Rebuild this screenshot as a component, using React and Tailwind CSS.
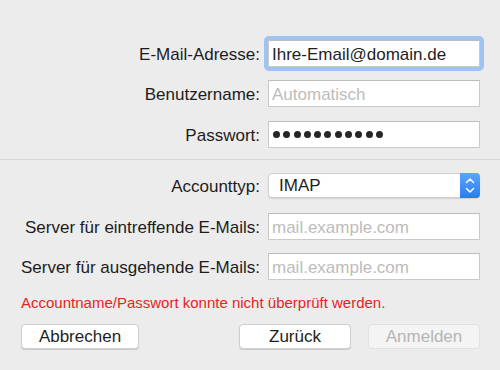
import React from "react";

function Label({ children }) {
  return <div className="w-[260px] shrink-0 pt-[2px] text-right whitespace-nowrap">{children}</div>;
}

function TextField({ value, placeholder, className = "" }) {
  return (
    <div
      className={`ml-[8px] flex h-[27px] w-[212px] items-center border border-[#c9c9c9] border-t-[#bdbdbd] bg-white pl-[3px] pt-[2px] ${className}`}
    >
      {value ? (
        <span className="text-[#1e1e1e]">{value}</span>
      ) : (
        <span className="text-[#bcbcbc]">{placeholder}</span>
      )}
    </div>
  );
}

function Row({ label, children, className = "" }) {
  return (
    <div className={`flex items-center ${className}`}>
      <Label>{label}</Label>
      {children}
    </div>
  );
}

export default function App() {
  return (
    <div className="h-[370px] w-[500px] overflow-hidden bg-[#ececec] font-['Liberation_Sans',Arial,sans-serif] text-[17px] leading-[20px] text-[#1c1c1c]">
      <div className="flex flex-col pt-[40px]">
        <Row label="E-Mail-Adresse:">
          <TextField
            value="Ihre-Email@domain.de"
            className="rounded-[1px] outline-[4px] outline-solid outline-[#9fc4f3]"
          />
        </Row>
        <Row label="Benutzername:" className="mt-[13px]">
          <TextField placeholder="Automatisch" />
        </Row>
        <Row label="Passwort:" className="mt-[14px]">
          <div className="ml-[8px] flex h-[27px] w-[212px] items-center gap-[3.3px] border border-[#c9c9c9] border-t-[#bdbdbd] bg-white pl-[4px]">
            {Array.from({ length: 11 }).map((_, i) => (
              <div key={i} className="h-[7px] w-[7px] rounded-full bg-[#262626]" />
            ))}
          </div>
        </Row>
      </div>

      <div className="mt-[11px] h-px bg-[#d6d6d6]" />

      <div className="flex flex-col">
        <Row label="Accounttyp:" className="mt-[13px]">
          <div className="ml-[8px] flex h-[25px] w-[212px] items-center rounded-[4px] border border-[#d0d0d0] bg-white shadow-[0_1px_1px_rgba(0,0,0,0.12)]">
            <span className="flex-1 pl-[10px] pt-[1px] text-[#1e1e1e]">IMAP</span>
            <div className="flex h-[25px] w-[20px] items-center justify-center -mr-px -my-px rounded-r-[4px] bg-gradient-to-b from-[#5ba6fa] to-[#2a7bf0]">
              <svg width="20" height="25" viewBox="0 0 20 25" fill="none" stroke="white" strokeWidth="1.5" strokeLinecap="round" strokeLinejoin="round">
                <polyline points="6.5,9.5 10,6 13.5,9.5" />
                <polyline points="6.5,15.5 10,19 13.5,15.5" />
              </svg>
            </div>
          </div>
        </Row>
        <Row label="Server für eintreffende E-Mails:" className="mt-[15px]">
          <TextField placeholder="mail.example.com" />
        </Row>
        <Row label="Server für ausgehende E-Mails:" className="mt-[13px]">
          <TextField placeholder="mail.example.com" />
        </Row>
      </div>

      <p className="mt-[13px] pl-[21px] text-[15px] text-[#e4251e]">Accountname/Passwort konnte nicht überprüft werden.</p>

      <div className="mt-[11px] flex items-center px-[21px] pr-[20px]">
        <button
          type="button"
          className="h-[25px] w-[118px] rounded-[4px] border border-[#cfcfcf] bg-white text-[#1e1e1e] shadow-[0_1px_1px_rgba(0,0,0,0.15)]"
        >
          Abbrechen
        </button>
        <div className="flex-1" />
        <button
          type="button"
          className="h-[25px] w-[112px] rounded-[4px] border border-[#cfcfcf] bg-white text-[#1e1e1e] shadow-[0_1px_1px_rgba(0,0,0,0.15)]"
        >
          Zurück
        </button>
        <button
          type="button"
          className="ml-[17px] h-[25px] w-[112px] rounded-[4px] border border-[#e0e0e0] bg-[#f4f4f4] text-[#b4b4b4]"
        >
          Anmelden
        </button>
      </div>
    </div>
  );
}
